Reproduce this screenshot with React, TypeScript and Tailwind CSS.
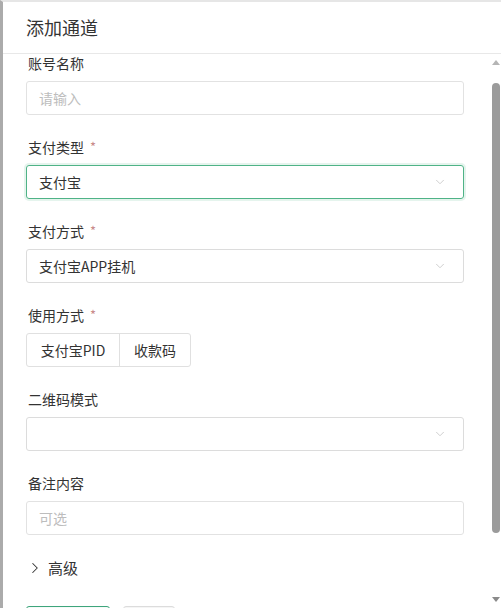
import { ChevronDown, ChevronRight } from "lucide-react";

const font = { fontFamily: '"Noto Sans CJK SC", "Noto Sans", sans-serif' };

function Label({ text, required }: { text: string; required?: boolean }) {
  return (
    <div className="flex h-5 items-center text-[14px] leading-5 text-[#333]">
      <span className="ml-[2px]">{text}</span>
      {required && <span className="ml-[6px] text-[13px] text-[#c98a8a]">*</span>}
    </div>
  );
}

function Select({ value, active }: { value?: string; active?: boolean }) {
  return (
    <div
      className={
        active
          ? "mt-2 flex h-[34px] items-center justify-between rounded-[3px] border border-[#4fb387] pl-3 pr-4 shadow-[0_0_0_2px_rgba(79,179,135,0.15)]"
          : "mt-2 flex h-[34px] items-center justify-between rounded-[3px] border border-[#dcdcdc] pl-3 pr-4"
      }
    >
      <span className="text-[14px] text-[#333]">{value}</span>
      <ChevronDown className="text-[#c8c8c8]" size={14} strokeWidth={1.5} />
    </div>
  );
}

function Input({ placeholder }: { placeholder: string }) {
  return (
    <div className="mt-2 flex h-[34px] items-center rounded-[3px] border border-[#e2e2e2] pl-3">
      <span className="text-[14px] text-[#bdbdbd]">{placeholder}</span>
    </div>
  );
}

export default function App() {
  return (
    <div
      className="flex h-[608px] w-[501px] flex-col overflow-hidden border-l-[3px] border-t-2 border-l-[#ababab] border-t-[#e6e6e6] bg-white"
      style={font}
    >
      {/* Header */}
      <div className="flex h-[52px] shrink-0 items-center border-b border-[#e8e8e8] pl-[23px]">
        <h1 className="text-[18px] font-normal text-[#333]">添加通道</h1>
      </div>

      <div className="flex min-h-0 flex-1">
        {/* Form */}
        <div className="-mt-[1px] flex-1 pl-[23px] pr-[26px]">
          <div className="mb-[22px]">
            <Label text="账号名称" />
            <Input placeholder="请输入" />
          </div>

          <div className="mb-[22px]">
            <Label text="支付类型" required />
            <Select value="支付宝" active />
          </div>

          <div className="mb-[22px]">
            <Label text="支付方式" required />
            <Select value="支付宝APP挂机" />
          </div>

          <div className="mb-[22px]">
            <Label text="使用方式" required />
            <div className="mt-2 flex h-[34px] w-fit rounded-[3px] border border-[#e0e0e0]">
              <div className="flex w-[93px] items-center justify-center border-r border-[#e0e0e0] text-[14px] text-[#333]">
                支付宝PID
              </div>
              <div className="flex w-[70px] items-center justify-center text-[14px] text-[#333]">
                收款码
              </div>
            </div>
          </div>

          <div className="mb-[22px]">
            <Label text="二维码模式" />
            <Select />
          </div>

          <div className="mb-[22px]">
            <Label text="备注内容" />
            <Input placeholder="可选" />
          </div>

          <div className="mt-[22px] flex items-center gap-[4px] text-[15px] text-[#333]">
            <ChevronRight size={18} strokeWidth={1.4} />
            <span>高级</span>
          </div>

          <div className="mt-[26px] flex gap-[13px]">
            <div className="h-[30px] w-[84px] rounded-[3px] border border-[#3fa57c] bg-[#f4fbf8]" />
            <div className="h-[30px] w-[52px] rounded-[3px] border border-[#dcdcdc] bg-[#f5f5f5]" />
          </div>
        </div>

        {/* Scrollbar */}
        <div className="flex w-[11px] shrink-0 flex-col items-center pb-[6px] pt-[6px]">
          <div className="h-0 w-0 border-x-[4px] border-b-[5px] border-x-transparent border-b-[#b5b5b5]" />
          <div className="mt-[18px] h-[450px] w-[8px] rounded-full bg-[#9b9b9b]" />
          <div className="flex-1" />
          <div className="h-0 w-0 border-x-[4px] border-t-[5px] border-x-transparent border-t-[#8a8a8a]" />
        </div>
      </div>
    </div>
  );
}
